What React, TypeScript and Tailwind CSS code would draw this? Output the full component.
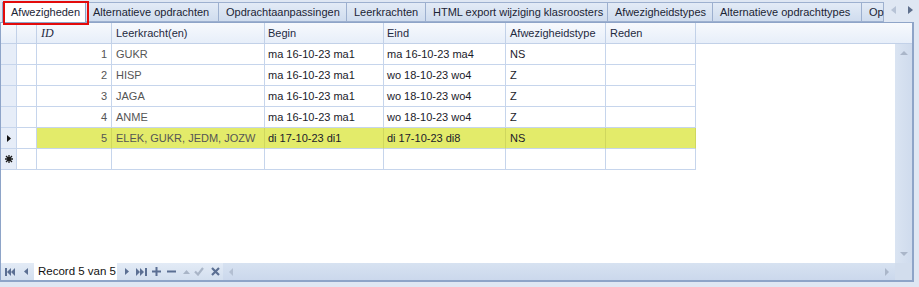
import React from "react";

type Row = {
  id?: number;
  teachers: string;
  begin: string;
  end: string;
  type: string;
  selected?: boolean;
};

const rows: Row[] = [
  { id: 1, teachers: "GUKR", begin: "ma 16-10-23 ma1", end: "ma 16-10-23 ma4", type: "NS" },
  { id: 2, teachers: "HISP", begin: "ma 16-10-23 ma1", end: "wo 18-10-23 wo4", type: "Z" },
  { id: 3, teachers: "JAGA", begin: "ma 16-10-23 ma1", end: "wo 18-10-23 wo4", type: "Z" },
  { id: 4, teachers: "ANME", begin: "ma 16-10-23 ma1", end: "wo 18-10-23 wo4", type: "Z" },
  {
    id: 5,
    teachers: "ELEK, GUKR, JEDM, JOZW",
    begin: "di 17-10-23 di1",
    end: "di 17-10-23 di8",
    type: "NS",
    selected: true,
  },
];

const tabs = [
  { label: "Alternatieve opdrachten", w: "w-[133px]" },
  { label: "Opdrachtaanpassingen", w: "w-[128px]" },
  { label: "Leerkrachten", w: "w-[79px]" },
  { label: "HTML export wijziging klasroosters", w: "w-[182px]" },
  { label: "Afwezigheidstypes", w: "w-[105px]" },
  { label: "Alternatieve opdrachttypes", w: "w-[149px]" },
  { label: "Op", w: "w-[22px]" },
];

const ICON = "#5b6f93";
const DIM = "#a9b5c7";

function Tabs() {
  return (
    <div className="relative flex h-[22px] items-end">
      <div className="flex h-[20px] w-[884px] items-end overflow-hidden pl-[2px]">
        <div className="flex h-[21px] w-[84px] shrink-0 items-center border border-b-0 border-[#8ea4c8] bg-white pl-[8px] text-[#1b2435]">
          Afwezigheden
        </div>
        {tabs.map((t) => (
          <div
            key={t.label}
            className={`flex h-[20px] shrink-0 items-center border border-l-0 border-[#9db0cf] bg-gradient-to-b from-[#e3ebf6] to-[#cfdcee] pl-[7px] whitespace-nowrap text-[#1b2435] ${t.w}`}
          >
            {t.label}
          </div>
        ))}
      </div>
      <div className="flex h-[22px] flex-1 items-center justify-center gap-[12px] pb-[2px]">
        <svg width="5" height="8" viewBox="0 0 5 8">
          <polygon points="5,0 0,4 5,8" fill="#b7c3d6" />
        </svg>
        <svg width="5" height="8" viewBox="0 0 5 8">
          <polygon points="0,0 5,4 0,8" fill="#5e6f8c" />
        </svg>
      </div>
      <div className="pointer-events-none absolute left-[3px] top-[1px] h-[24px] w-[86px] border-2 border-[#e30b0b]" />
    </div>
  );
}

function HeaderRow() {
  const h = "h-[21px] shrink-0 border-r border-b border-[#c2d1e8] flex items-center";
  return (
    <div className="flex bg-gradient-to-b from-[#f7f9fd] to-[#e6eef9] text-[#1f2a3f]">
      <div className={`${h} w-[16px]`} />
      <div className={`${h} w-[20px]`} />
      <div className={`${h} w-[75px] pl-[4px] font-['Liberation_Serif',serif] text-[12px] italic`}>ID</div>
      <div className={`${h} w-[153px] pl-[4px]`}>Leerkracht(en)</div>
      <div className={`${h} w-[119px] pl-[3px]`}>Begin</div>
      <div className={`${h} w-[122px] pl-[3px]`}>Eind</div>
      <div className={`${h} w-[100px] pl-[4px]`}>Afwezigheidstype</div>
      <div className={`${h} w-[90px] pl-[4px]`}>Reden</div>
      <div className="h-[21px] flex-1 border-b border-[#c2d1e8]" />
    </div>
  );
}

function DataRow({ row }: { row: Row }) {
  const c = "h-[21px] shrink-0 border-r border-b border-[#c6d5ec] flex items-center whitespace-nowrap";
  const bg = row.selected ? "bg-[#e3eb6a] border-r-[#cfd75e]" : "";
  return (
    <div className="flex">
      <div className={`${c} w-[16px] justify-center bg-[#e6edf8]`}>
        {row.selected && (
          <svg width="4" height="7" viewBox="0 0 4 7">
            <polygon points="0,0 4,3.5 0,7" fill="#111" />
          </svg>
        )}
      </div>
      <div className={`${c} w-[20px]`} />
      <div className={`${c} ${bg} w-[75px] justify-end pr-[4px] text-[#555]`}>{row.id}</div>
      <div className={`${c} ${bg} w-[153px] pl-[4px] text-[#555]`}>{row.teachers}</div>
      <div className={`${c} ${bg} w-[119px] pl-[3px] text-[#1a1a2a]`}>{row.begin}</div>
      <div className={`${c} ${bg} w-[122px] pl-[3px] text-[#1a1a2a]`}>{row.end}</div>
      <div className={`${c} ${bg} w-[100px] pl-[4px] text-[#1a1a2a]`}>{row.type}</div>
      <div className={`${c} ${bg} w-[90px]`} />
    </div>
  );
}

function NewRow() {
  const c = "h-[21px] shrink-0 border-r border-b border-[#c6d5ec]";
  return (
    <div className="flex">
      <div className={`${c} w-[16px] flex items-center justify-center bg-[#e6edf8]`}>
        <svg width="8" height="8" viewBox="0 0 8 8">
          <path d="M4 0 V8 M0 4 H8 M1 1 L7 7 M7 1 L1 7" stroke="#1a1a1a" strokeWidth="1.3" />
        </svg>
      </div>
      <div className={`${c} w-[20px]`} />
      <div className={`${c} w-[75px]`} />
      <div className={`${c} w-[153px]`} />
      <div className={`${c} w-[119px]`} />
      <div className={`${c} w-[122px]`} />
      <div className={`${c} w-[100px]`} />
      <div className={`${c} w-[90px]`} />
    </div>
  );
}

function Navigator() {
  return (
    <div className="flex h-[17px] w-[222px] shrink-0 items-center bg-gradient-to-b from-[#e3ebf6] to-[#d3dfef]">
      <svg className="ml-[4px]" width="10" height="8" viewBox="0 0 10 8">
        <rect x="0" y="0" width="2" height="8" fill={ICON} />
        <polygon points="6,0 2,4 6,8" fill={ICON} />
        <polygon points="10,0 6,4 10,8" fill={ICON} />
      </svg>
      <svg className="ml-[9px]" width="4" height="7" viewBox="0 0 4 7">
        <polygon points="4,0 0,3.5 4,7" fill={ICON} />
      </svg>
      <div className="ml-[6px] flex h-[17px] w-[83px] items-center bg-white pl-[4px] text-[11.5px] text-[#111]">
        Record 5 van 5
      </div>
      <svg className="ml-[8px]" width="4" height="7" viewBox="0 0 4 7">
        <polygon points="0,0 4,3.5 0,7" fill={ICON} />
      </svg>
      <svg className="ml-[7px]" width="11" height="8" viewBox="0 0 11 8">
        <polygon points="0,0 4,4 0,8" fill={ICON} />
        <polygon points="4,0 8,4 4,8" fill={ICON} />
        <rect x="9" y="0" width="2" height="8" fill={ICON} />
      </svg>
      <svg className="ml-[5px]" width="9" height="9" viewBox="0 0 9 9">
        <rect x="3.5" y="0" width="2" height="9" fill={ICON} />
        <rect x="0" y="3.5" width="9" height="2" fill={ICON} />
      </svg>
      <svg className="ml-[6px]" width="9" height="9" viewBox="0 0 9 9">
        <rect x="0" y="3.5" width="9" height="2" fill={ICON} />
      </svg>
      <svg className="ml-[7px]" width="7" height="4" viewBox="0 0 7 4">
        <polygon points="0,4 3.5,0 7,4" fill={DIM} />
      </svg>
      <svg className="ml-[4px]" width="10" height="9" viewBox="0 0 10 9">
        <polyline points="1,4.5 4,7.5 9,1" fill="none" stroke={DIM} strokeWidth="2.2" />
      </svg>
      <svg className="ml-[7px]" width="9" height="9" viewBox="0 0 9 9">
        <path d="M1 1 L8 8 M8 1 L1 8" stroke={ICON} strokeWidth="2.2" />
      </svg>
    </div>
  );
}

export default function App() {
  return (
    <div className="h-[287px] w-[919px] overflow-hidden bg-[#dfe7f3] font-['Liberation_Sans',Arial,sans-serif] text-[11px]">
      <Tabs />
      <div className="flex h-[260px] w-[914px] flex-col border-l border-t border-r-2 border-b-2 border-[#8ea4c8] bg-white">
        <HeaderRow />
        <div className="flex flex-1">
          <div className="flex-1">
            {rows.map((r) => (
              <DataRow key={r.id} row={r} />
            ))}
            <NewRow />
          </div>
          <div className="flex w-[17px] flex-col items-center justify-between bg-gradient-to-r from-[#dae4f2] to-[#cfdbed] py-[7px]">
            <svg width="8" height="4" viewBox="0 0 8 4">
              <polygon points="0,4 4,0 8,4" fill="#aab6c9" />
            </svg>
            <svg width="8" height="4" viewBox="0 0 8 4">
              <polygon points="0,0 4,4 8,0" fill="#aab6c9" />
            </svg>
          </div>
        </div>
        <div className="flex h-[17px]">
          <Navigator />
          <div className="flex flex-1 items-center justify-between bg-gradient-to-b from-[#d7e2f1] to-[#cbd8ec] px-[6px]">
            <svg width="4" height="8" viewBox="0 0 4 8">
              <polygon points="4,0 0,4 4,8" fill="#b3bfd2" />
            </svg>
            <svg width="4" height="8" viewBox="0 0 4 8">
              <polygon points="0,0 4,4 0,8" fill="#aab6c9" />
            </svg>
          </div>
          <div className="w-[17px] bg-[#d2dded]" />
        </div>
      </div>
    </div>
  );
}
